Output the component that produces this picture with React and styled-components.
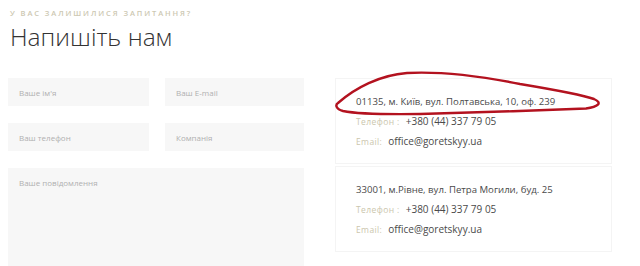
import React from 'react'
import styled, { createGlobalStyle } from 'styled-components';

const GlobalStyle = createGlobalStyle`
    html, body {
        margin: 0;
        padding: 0;
        background: #ffffff;
        font-family: "Open Sans", "DejaVu Sans", sans-serif;
        overflow: hidden;
    }
`

const offices = [
    { address: '01135, м. Київ, вул. Полтавська, 10, оф. 239', phone: '+380 (44) 337 79 05', email: 'office@goretskyy.ua' },
    { address: '33001, м.Рівне, вул. Петра Могили, буд. 25', phone: '+380 (44) 337 79 05', email: 'office@goretskyy.ua' },
];

const ContactSection = () => {
    return (
        <Section>
            <GlobalStyle />
            <Header>
                <Eyebrow>У вас залишилися запитання?</Eyebrow>
                <Title>Напишіть нам</Title>
            </Header>
            <Body>
                <Form>
                    <Field placeholder="Ваше ім'я" />
                    <Field placeholder="Ваш E-mail" />
                    <Field placeholder="Ваш телефон" />
                    <Field placeholder="Компанія" />
                    <Message placeholder="Ваше повідомлення" />
                </Form>
                <Offices>
                    {offices.map((o, i) => (
                        <Card key={i}>
                            <Address>{o.address}</Address>
                            <Line><Label>Телефон :</Label>{o.phone}</Line>
                            <Line><Label>Email:</Label>{o.email}</Line>
                        </Card>
                    ))}
                    {/* hand-drawn red mark over the first address */}
                    <Scribble viewBox="0 0 300 60" width="300" height="60">
                        <path
                            d="M3 33 C 20 18, 45 5, 72 3 C 110 1, 150 7, 185 14 C 215 19, 245 24, 259 29 C 268 33, 263 37, 251 38.5 C 200 40.5, 130 43, 85 44 C 50 44.5, 20 43.5, 8 41 C 1 39, 0 35, 3 33 Z"
                            fill="none"
                            stroke="#b3121f"
                            strokeWidth="2.4"
                            strokeLinejoin="round"
                        />
                    </Scribble>
                </Offices>
            </Body>
        </Section>
    )
}

export default ContactSection;

const Section = styled.div`
    width: 640px;
    height: 266px;
    padding: 8px 0 0 8px;
    box-sizing: border-box;
`

const Header = styled.div`
    display: flex;
    flex-direction: column;
    padding-left: 2px;
`

const Eyebrow = styled.div`
    font-size: 7.5px;
    line-height: 11px;
    text-transform: uppercase;
    letter-spacing: 1.9px;
    color: #cdc8b2;
    font-weight: 600;
`

const Title = styled.h2`
    margin: 3px 0 0;
    font-size: 24.5px;
    line-height: 30px;
    font-weight: 300;
    color: #333333;
`

const Body = styled.div`
    display: flex;
    margin-top: 26px;
`

const Form = styled.div`
    display: grid;
    grid-template-columns: 141px 139px;
    column-gap: 16px;
    row-gap: 17px;
    width: 296px;
    align-content: start;
`

const Field = styled.input`
    height: 28px;
    border: none;
    outline: none;
    background: #f7f7f7;
    padding: 0 11px;
    font-family: inherit;
    font-size: 8px;
    color: #555;
    box-sizing: border-box;
    &::placeholder {
        color: #b0b0b0;
    }
`

const Message = styled.textarea`
    grid-column: 1 / 3;
    height: 100px;
    border: none;
    outline: none;
    resize: none;
    background: #f7f7f7;
    padding: 9px 11px;
    font-family: inherit;
    font-size: 8px;
    box-sizing: border-box;
    &::placeholder {
        color: #b0b0b0;
    }
`

const Offices = styled.div`
    position: relative;
    display: flex;
    flex-direction: column;
    gap: 2px;
    margin-left: 31px;
    width: 277px;
`

const Card = styled.div`
    border: 1px solid #f4f4f4;
    padding: 16px 20px 14px;
    display: flex;
    flex-direction: column;
    gap: 5px;
    height: 86px;
    box-sizing: border-box;
    justify-content: center;
`

const Address = styled.div`
    font-size: 9.6px;
    line-height: 14px;
    color: #4a4a4a;
`

const Line = styled.div`
    font-size: 10px;
    line-height: 14px;
    color: #4a4a4a;
`

const Label = styled.span`
    color: #cbc6ad;
    font-size: 8.5px;
    letter-spacing: 0.4px;
    margin-right: 6px;
`

const Scribble = styled.svg`
    position: absolute;
    left: 0;
    top: -8px;
    pointer-events: none;
`
